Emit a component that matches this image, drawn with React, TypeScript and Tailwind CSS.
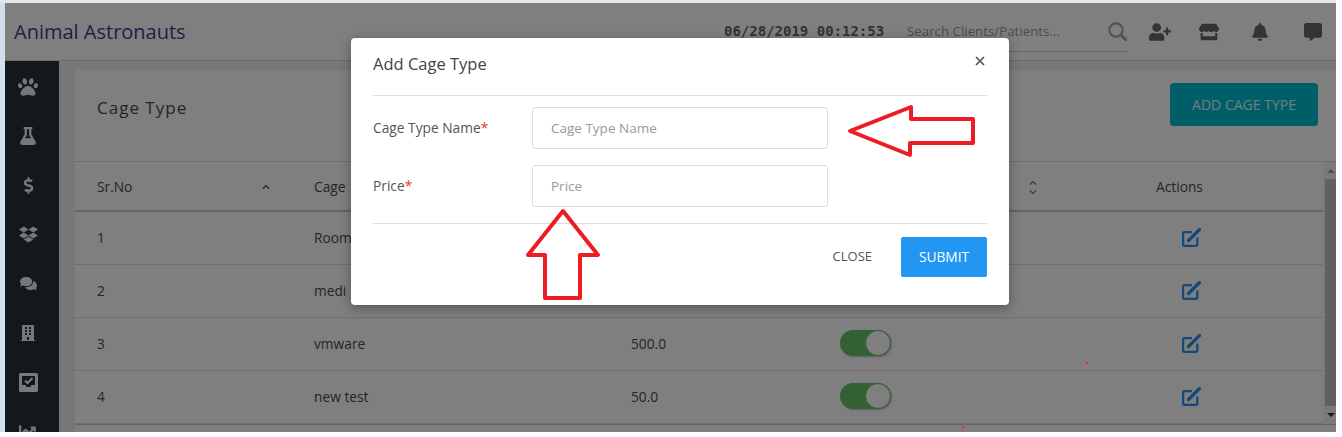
import { FaPaw, FaFlask, FaDollarSign, FaDropbox, FaComments, FaUserPlus, FaStore, FaBell, FaCommentAlt, FaChartLine, FaBuilding, FaChevronUp, FaChevronDown } from 'react-icons/fa'

const rows = [
  { no: 1, name: 'Room', price: '' },
  { no: 2, name: 'medi', price: '' },
  { no: 3, name: 'vmware', price: '500.0' },
  { no: 4, name: 'new test', price: '50.0' },
]

const gridCols = 'grid grid-cols-[217px_317px_209px_242px_263px]'

function InboxCheck() {
  return (
    <svg width="19" height="19" viewBox="0 0 19 19">
      <path d="M0 1.5A1.5 1.5 0 0 1 1.5 0h16A1.5 1.5 0 0 1 19 1.5v16a1.5 1.5 0 0 1-1.5 1.5h-16A1.5 1.5 0 0 1 0 17.5z" fill="#fff" fillOpacity="0.95" />
      <path d="M3 3h13v9h-3.5l-1 2h-4l-1-2H3z" fill="#243039" />
      <path d="M6 7.5l2.5 2.5L13.5 5" stroke="#fff" strokeWidth="2" fill="none" />
    </svg>
  )
}

function EditIcon() {
  return (
    <svg width="19" height="19" viewBox="0 0 19 19" fill="none" stroke="#2c8ff0">
      <path d="M10 4.2H2.5A1.4 1.4 0 0 0 1.1 5.6v10.9a1.4 1.4 0 0 0 1.4 1.4h11.4a1.4 1.4 0 0 0 1.4-1.4V9.5" strokeWidth="2.2" />
      <path d="M6.5 12.5L17.5 1.5" strokeWidth="3.2" strokeLinecap="round" />
    </svg>
  )
}

function SearchIcon() {
  return (
    <svg width="19" height="19" viewBox="0 0 19 19" fill="none" stroke="#a6a6a6">
      <circle cx="8" cy="8" r="6.6" strokeWidth="2.2" />
      <path d="M13 13l4.6 4.6" strokeWidth="3" strokeLinecap="round" />
    </svg>
  )
}

function Toggle() {
  return (
    <div className="flex h-[26px] w-[51px] justify-end rounded-full bg-[#66c266] shadow-[1px_1px_2px_rgba(0,0,0,0.25)]">
      <div className="h-[26px] w-[26px] rounded-full border border-[#66c266] bg-white" />
    </div>
  )
}

function SortIcon() {
  return (
    <span className="flex flex-col items-center text-[#777]">
      <FaChevronUp size={8} />
      <FaChevronDown size={8} className="mt-[1px]" />
    </span>
  )
}

function SideItem({ children }: { children: React.ReactNode }) {
  return <div className="flex h-[49.3px] w-full shrink-0 items-center justify-center pr-[8px]">{children}</div>
}

export default function App() {
  return (
    <div className="relative h-[437px] w-[1342px] overflow-hidden bg-white font-['Open_Sans',sans-serif] text-[13.75px] text-[#4a4a4a]">
      <div className="h-[3px] w-[1336px] bg-[#e6e6e6]" />
      <div className="flex h-[429px] w-[1336px]">
        <div className="w-[5px] shrink-0 bg-[#d3deee]" />
        <div className="relative flex min-w-0 flex-1 flex-col overflow-hidden bg-[#eeeeee]">
          {/* 상단 헤더 */}
          <header className="flex h-[58px] shrink-0 items-center border-b border-[#d8d8d8] bg-white">
            <div className="w-[719px] pl-[9px] text-[20px] font-medium leading-none text-[#453d8c]">Animal Astronauts</div>
            <div className="w-[183px] font-['DejaVu_Sans_Mono',monospace] text-[14px] font-bold text-[#666]">06/28/2019 00:12:53</div>
            <div className="flex h-[40px] w-[220px] items-center justify-between border-b border-[#ccc] text-[13.3px] text-[#999]">
              <span className="pt-[2px]">Search Clients/Patients...</span>
              <SearchIcon />
            </div>
            <div className="ml-[22px] flex items-center gap-[28px] text-[#666]">
              <FaUserPlus size={22} />
              <FaStore size={20} />
              <FaBell size={18} className="mx-[4px]" />
              <FaCommentAlt size={18} className="ml-[3px]" />
            </div>
          </header>

          <div className="flex min-h-0 flex-1">
            {/* 사이드바 */}
            <aside className="flex w-[54px] shrink-0 flex-col items-center overflow-hidden bg-[#243039] pt-[1px] text-[#eee]">
              <SideItem><FaPaw size={20} /></SideItem>
              <SideItem><FaFlask size={18} /></SideItem>
              <SideItem><FaDollarSign size={17} /></SideItem>
              <SideItem><FaDropbox size={19} /></SideItem>
              <SideItem><FaComments size={17} /></SideItem>
              <SideItem><FaBuilding size={16} /></SideItem>
              <SideItem><InboxCheck /></SideItem>
              <SideItem><FaChartLine size={18} /></SideItem>
            </aside>

            <main className="min-w-0 flex-1 pl-[16px] pt-[9px]">
              <div className="h-full rounded-tl-[4px] bg-white">
                <div className="flex h-[92px] items-start justify-between border-b border-[#ddd] pl-[22px] pr-[18px] pt-[13px]">
                  <h2 className="mt-[12px] text-[17px] tracking-[1px]">Cage Type</h2>
                  <button className="h-[43px] w-[148px] rounded-[4px] bg-[#00bcd0] text-[14px] text-white/90">ADD CAGE TYPE</button>
                </div>

                <div className="flex">
                  <div className="min-w-0 flex-1">
                    <div className={`${gridCols} h-[50px] items-center border-b-2 border-[#c8c8c8] pt-[2px]`}>
                      <div className="flex items-center justify-between pl-[22px] pr-[22px]">
                        <span>Sr.No</span>
                        <FaChevronUp size={8} />
                      </div>
                      <div className="pl-[22px]">Cage</div>
                      <div className="pl-[22px]">Price</div>
                      <div className="flex justify-end pr-[23px]"><SortIcon /></div>
                      <div className="pl-[96px]">Actions</div>
                    </div>
                    {rows.map((r) => (
                      <div key={r.no} className={`${gridCols} h-[53px] items-center border-b border-[#ddd] pb-[2px]`}>
                        <div className="pl-[22px] pt-[2px]">{r.no}</div>
                        <div className="pl-[22px] pt-[2px]">{r.name}</div>
                        <div className="pl-[22px] pt-[2px]">{r.price}</div>
                        <div className="pl-[22px]"><Toggle /></div>
                        <div className="pl-[122px]"><EditIcon /></div>
                      </div>
                    ))}
                  </div>
                  {/* 스크롤바 */}
                  <div className="flex h-[262px] w-[13px] shrink-0 flex-col items-end bg-[#f4f4f4]">
                    <div className="flex h-[17px] w-[11px] items-center justify-center">
                      <div className="h-0 w-0 border-x-[4px] border-b-[4px] border-x-transparent border-b-[#999]" />
                    </div>
                    <div className="w-[11px] flex-1 bg-[#c1c1c1]" />
                    <div className="flex h-[18px] w-[11px] items-center justify-center">
                      <div className="h-0 w-0 border-x-[4px] border-t-[4px] border-x-transparent border-t-[#333]" />
                    </div>
                  </div>
                </div>
                <div className="border-t border-[#c8c8c8]" />
              </div>
            </main>
          </div>
        </div>
      </div>

      {/* 모달 백드롭 */}
      <div className="absolute left-[5px] top-[3px] h-[429px] w-[1331px] bg-black/50" />

      <div className="absolute left-[351px] top-[38px] h-[267px] w-[658px] rounded-[4px] bg-white px-[22px] shadow-[0_3px_12px_rgba(0,0,0,0.35)]">
        <div className="flex h-[58px] items-center justify-between border-b border-[#ddd] pb-[6px]">
          <h3 className="pt-[2px] text-[16.5px] text-[#444]">Add Cage Type</h3>
          <svg width="10" height="10" viewBox="0 0 10 10" stroke="#555" strokeWidth="1.7" className="mb-[6px] mr-[2px]">
            <path d="M1 1l8 8M9 1l-8 8" />
          </svg>
        </div>
        <div className="flex flex-col gap-[16px] border-b border-[#ddd] py-[11px] pb-[16px]">
          <div className="flex items-start">
            <label className="w-[159px] pt-[11px] text-[#555]">Cage Type Name<span className="text-[#e53935]">*</span></label>
            <input placeholder="Cage Type Name" className="h-[42px] w-[296px] rounded-[3px] border border-[#ddd] px-[18px] text-[13.5px] placeholder:text-[#999]" />
          </div>
          <div className="flex items-start">
            <label className="w-[159px] pt-[11px] text-[#555]">Price<span className="text-[#e53935]">*</span></label>
            <input placeholder="Price" className="h-[42px] w-[296px] rounded-[3px] border border-[#ddd] px-[18px] text-[13.5px] placeholder:text-[#999]" />
          </div>
        </div>
        <div className="flex items-center justify-end pt-[13px]">
          <button className="mr-[29px] text-[13px] text-[#555]">CLOSE</button>
          <button className="h-[40px] w-[86px] rounded-[2px] bg-[#2196f3] text-[13.75px] font-medium text-white">SUBMIT</button>
        </div>
      </div>

      {/* 스크린샷 위에 그려진 화살표 */}
      <svg className="absolute left-0 top-0" width="1342" height="437" fill="none" stroke="#ed1c24" strokeWidth="4" strokeLinejoin="round">
        <path d="M850 131L911 107V119H973V143H910V155Z" />
        <path d="M563 211L598 255H580V298H545V255H528Z" />
      </svg>
      <div className="absolute left-[1086px] top-[362px] h-[2px] w-[2px] bg-[#ff2020]" />
      <div className="absolute left-[962px] top-[426px] h-[2px] w-[2px] bg-[#ff2020]" />
    </div>
  )
}
